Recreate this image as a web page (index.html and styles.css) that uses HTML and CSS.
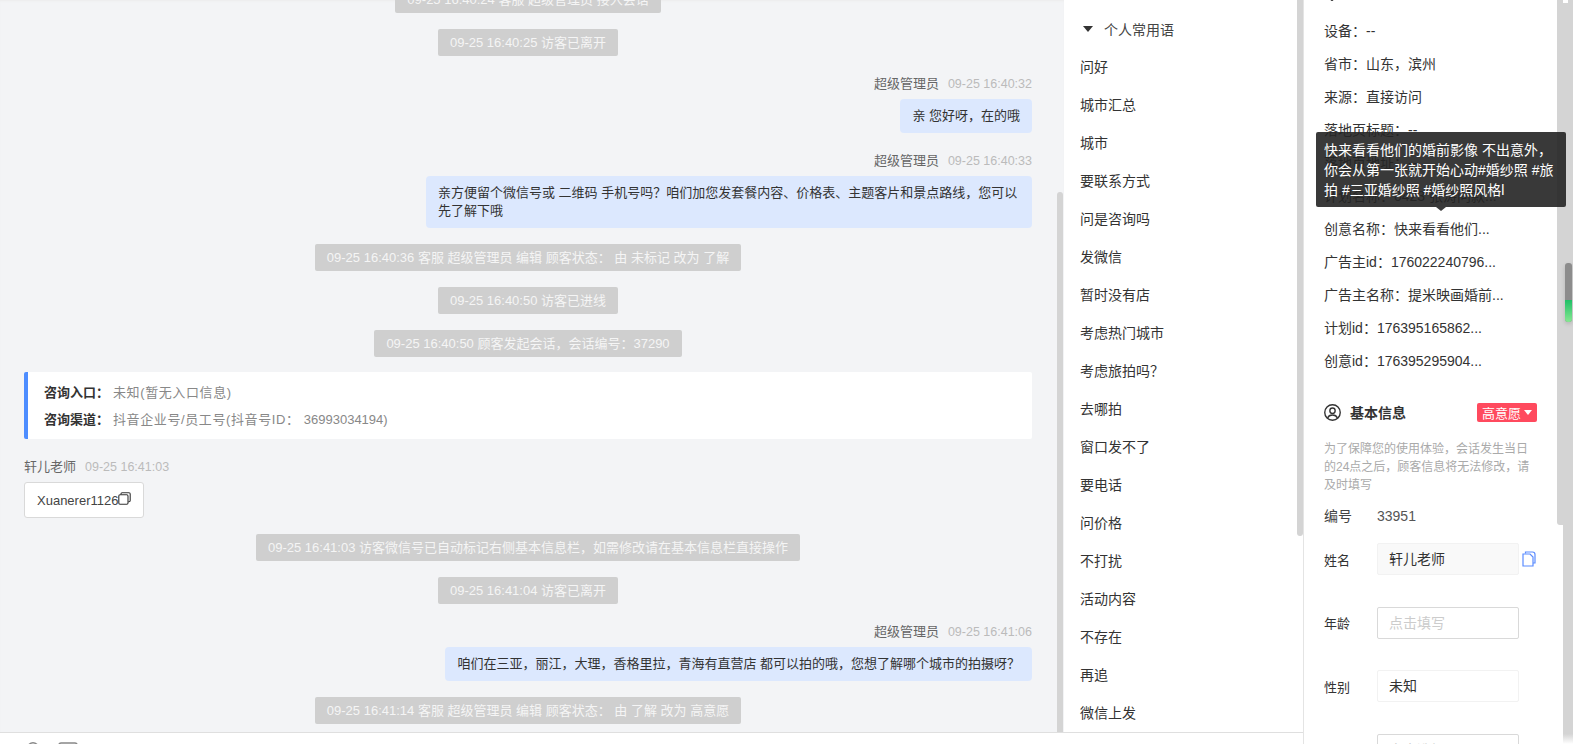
FILE: index.html
```html
<!DOCTYPE html>
<html lang="zh-CN">
<head>
  <meta charset="UTF-8" />
  <title>会话详情</title>
  <link rel="stylesheet" href="styles.css">
</head>
<body>
  <div class="page">
    <div class="main">
      <div class="work">
        <!-- chat log -->
        <div class="chat">
          <div class="chat-list">
            <div class="sys">09-25 16:40:24 客服 超级管理员 接入会话</div>
            <div class="sys">09-25 16:40:25 访客已离开</div>
            <div class="msg msg-me">
              <div class="msg-head"><span class="msg-name">超级管理员</span><span class="msg-time">09-25 16:40:32</span></div>
              <div class="bubble">亲 您好呀，在的哦</div>
            </div>
            <div class="msg msg-me">
              <div class="msg-head"><span class="msg-name">超级管理员</span><span class="msg-time">09-25 16:40:33</span></div>
              <div class="bubble bubble-long">亲方便留个微信号或 二维码 手机号吗？咱们加您发套餐内容、价格表、主题客片和景点路线，您可以先了解下哦</div>
            </div>
            <div class="sys">09-25 16:40:36 客服 超级管理员 编辑 顾客状态： 由 未标记 改为 了解</div>
            <div class="sys">09-25 16:40:50 访客已进线</div>
            <div class="sys">09-25 16:40:50 顾客发起会话，会话编号：37290</div>
            <div class="entry">
              <p><strong>咨询入口：</strong><span class="entry-val">未知(暂无入口信息)</span></p>
              <p><strong>咨询渠道：</strong><span class="entry-val">抖音企业号/员工号(抖音号ID： <span class="entry-num">36993034194)</span></span></p>
            </div>
            <div class="msg">
              <div class="msg-head"><span class="msg-name">轩儿老师</span><span class="msg-time">09-25 16:41:03</span></div>
              <div class="copy-box">Xuanerer1126<svg width="13" height="13" viewBox="0 0 13 13" fill="none" stroke="#333" stroke-width="1.1">
                  <rect x="0.8" y="2.8" width="9.2" height="9.4" rx="1.2"/>
                  <path d="M3 2.6V1.8Q3 .7 4.1 .7H11Q12.2 .7 12.2 1.9V8.6Q12.2 9.8 11 9.8H10.2"/>
                </svg>
              </div>
            </div>
            <div class="sys">09-25 16:41:03 访客微信号已自动标记右侧基本信息栏，如需修改请在基本信息栏直接操作</div>
            <div class="sys">09-25 16:41:04 访客已离开</div>
            <div class="msg msg-me">
              <div class="msg-head"><span class="msg-name">超级管理员</span><span class="msg-time">09-25 16:41:06</span></div>
              <div class="bubble">咱们在三亚，丽江，大理，香格里拉，青海有直营店 都可以拍的哦，您想了解哪个城市的拍摄呀？</div>
            </div>
            <div class="sys">09-25 16:41:14 客服 超级管理员 编辑 顾客状态： 由 了解 改为 高意愿</div>
          </div>
          <div class="chat-thumb"></div>
        </div>

        <!-- common phrases -->
        <div class="phrases">
          <div class="phrases-head"><span class="caret"></span>个人常用语</div>
          <div class="phrase">问好</div>
          <div class="phrase">城市汇总</div>
          <div class="phrase">城市</div>
          <div class="phrase">要联系方式</div>
          <div class="phrase">问是咨询吗</div>
          <div class="phrase">发微信</div>
          <div class="phrase">暂时没有店</div>
          <div class="phrase">考虑热门城市</div>
          <div class="phrase">考虑旅拍吗？</div>
          <div class="phrase">去哪拍</div>
          <div class="phrase">窗口发不了</div>
          <div class="phrase">要电话</div>
          <div class="phrase">问价格</div>
          <div class="phrase">不打扰</div>
          <div class="phrase">活动内容</div>
          <div class="phrase">不存在</div>
          <div class="phrase">再追</div>
          <div class="phrase">微信上发</div>
          <div class="phrases-thumb"></div>
        </div>
      </div>

      <div class="toolbar">
        <svg width="12" height="12" viewBox="0 0 12 12" fill="none" stroke="#888" stroke-width="1.4"><circle cx="6" cy="6" r="5.300"/></svg>
        <svg width="20" height="12" viewBox="0 0 20 12" fill="none" stroke="#888" stroke-width="1.6"><rect x="1" y="1" width="18" height="10" rx="2"/></svg>
      </div>
    </div>

    <!-- visitor info -->
    <div class="side">
      <div class="side-inner">
        <svg class="top-icon" width="16" height="16" viewBox="0 0 16 16" fill="#333"><circle cx="8" cy="14.5" r="1.5"/></svg>
        <div class="info">设备：--</div>
        <div class="info">省市：山东，滨州</div>
        <div class="info">来源：直接访问</div>
        <div class="info">落地页标题：--</div>
        <div class="info">落地页地址：--</div>
        <div class="info">计划名称：0423 张涛问款...</div>
        <div class="info">创意名称：快来看看他们...</div>
        <div class="info">广告主id：176022240796...</div>
        <div class="info">广告主名称：提米映画婚前...</div>
        <div class="info">计划id：176395165862...</div>
        <div class="info">创意id：176395295904...</div>

        <div class="basic-head">
          <div class="basic-title">
            <svg width="17" height="17" viewBox="0 0 16 16" fill="none" stroke="#333" stroke-width="1.3">
              <circle cx="8" cy="8" r="7.3"/>
              <circle cx="8" cy="6.3" r="2.5"/>
              <path d="M3.4 13.2C4.2 11 6 10.4 8 10.4S11.800 11 12.600 13.200"/>
            </svg>
            基本信息
          </div>
          <div class="tag">高意愿<span class="tag-caret"></span></div>
        </div>
        <p class="basic-note">为了保障您的使用体验，会话发生当日的24点之后，顾客信息将无法修改，请及时填写</p>
        <div class="field-plain"><span class="field-label">编号</span>33951</div>
        <div class="field">
          <span class="field-label">姓名</span>
          <div class="input input-off">轩儿老师</div>
          <svg class="copy-blue" width="14" height="16" viewBox="0 0 14 16" fill="#fff" stroke="#5b8cff" stroke-width="1.2">
            <path d="M3.500 2.500V1H10.500Q13 1 13 3.500V12H11"/>
            <path d="M1 3H8L11 6V15H1Z"/>
          </svg>
        </div>
        <div class="field">
          <span class="field-label">年龄</span>
          <div class="input input-empty">点击填写</div>
        </div>
        <div class="field">
          <span class="field-label">性别</span>
          <div class="input input-soft">未知</div>
        </div>
        <div class="field">
          <span class="field-label">城市</span>
          <div class="input input-empty">点击选择</div>
        </div>
      </div>
      <div class="side-thumb"></div>
    </div>

    <div class="page-bar">
      <div class="page-mark"></div>
      <div class="page-thumb"><div class="page-thumb-green"></div></div>
    </div>

    <div class="tooltip">快来看看他们的婚前影像 不出意外，你会从第一张就开始心动#婚纱照 #旅拍 #三亚婚纱照 #婚纱照风格l</div>
  </div>
</body>
</html>
```

FILE: styles.css
```css
* {
  box-sizing: border-box;
}
html, body {
  margin: 0;
  height: 100%;
  overflow: hidden;
}
body {
  font-family: "Liberation Sans", "Noto Sans CJK SC", sans-serif;
  font-size: 13px;
  color: #333;
  background: #fff;
}
p {
  margin: 0;
}
.page {
  position: relative;
  display: flex;
  height: 744px;
  overflow: hidden;
}
.main {
  width: 1303px;
  flex: none;
  display: flex;
  flex-direction: column;
}
.work {
  display: flex;
  height: 733px;
  flex: none;
  border-bottom: 1px solid #dfdfdf;
}

/* chat */
.chat {
  position: relative;
  width: 1064px;
  flex: none;
  overflow: hidden;
  background: #f3f4f6;
  box-shadow: inset 0 2px 2px -1px #ececec;
  padding: 0 32px 0 24px;
}
.chat-list {
  display: flex;
  flex-direction: column;
  gap: 16px;
  margin-top: -14px;
}
.sys {
  align-self: center;
  height: 27px;
  line-height: 27px;
  padding: 0 12px;
  background: #cfcfcf;
  color: #f5f5f5;
  border-radius: 2px;
  white-space: nowrap;
}
.msg {
  display: flex;
  flex-direction: column;
  align-items: flex-start;
}
.msg-me {
  align-items: flex-end;
}
.msg-head {
  display: flex;
  gap: 9px;
  height: 24px;
  line-height: 24px;
  margin-bottom: 3px;
}
.msg-name {
  color: #666;
}
.msg-time {
  font-size: 12.500px;
  color: #bbb;
}
.bubble {
  padding: 8px 12px;
  line-height: 18px;
  background: #dce8fe;
  border-radius: 4px;
  color: #333;
}
.bubble-long {
  width: 606px;
}
.entry {
  margin-top: -1px;
  padding: 7px 16px 6px;
  background: #fff;
  border-left: 4px solid #4d8dff;
  border-radius: 2px;
  line-height: 27px;
  color: #888;
}
.entry strong {
  margin-right: 4px;
  color: #333;
  font-weight: 700;
}
.entry-val {
  letter-spacing: 0.6px;
}
.entry-num {
  letter-spacing: 0;
}
.copy-box {
  display: flex;
  align-items: center;
  width: 120px;
  height: 36px;
  padding-left: 12px;
  background: #fff;
  border: 1px solid #d9d9d9;
  border-radius: 3px;
  color: #444;
}
.copy-box svg {
  flex: none;
  margin-bottom: 3px;
}
.chat-thumb {
  position: absolute;
  top: 192px;
  bottom: 0;
  right: 1px;
  width: 6px;
  background: #d4d4d4;
  border-radius: 3px 3px 0 0;
}

/* phrases */
.phrases {
  position: relative;
  width: 239px;
  flex: none;
  overflow: hidden;
  background: #fff;
  padding: 0 6px 0 16px;
  font-size: 14px;
}
.phrases-head {
  display: flex;
  align-items: center;
  height: 60px;
  padding-left: 3px;
  padding-bottom: 2px;
  color: #444;
}
.caret {
  width: 0;
  height: 0;
  margin-right: 11px;
  border-left: 5px solid transparent;
  border-right: 5px solid transparent;
  border-top: 6px solid #333;
}
.phrase {
  height: 38px;
  line-height: 38px;
  color: #333;
}
.phrases-head + .phrase {
  margin-top: -12px;
}
.phrases-thumb {
  position: absolute;
  top: 0;
  right: 0;
  width: 6px;
  height: 536px;
  background: #d4d4d4;
  border-radius: 0 0 3px 3px;
}

.toolbar {
  display: flex;
  gap: 19px;
  padding: 9px 0 0 27px;
  background: #fff;
}
.toolbar svg {
  flex: none;
}

/* visitor info */
.side {
  position: relative;
  width: 260px;
  flex: none;
  overflow: hidden;
  background: #fff;
  border-left: 1px solid #e4e4e4;
}
.side-inner {
  padding-left: 20px;
  margin-top: -15px;
  font-size: 14px;
}
.top-icon {
  display: block;
  margin-bottom: 13.500px;
}
.info {
  height: 33px;
  line-height: 33px;
  white-space: nowrap;
  color: #333;
}
.basic-head {
  display: flex;
  align-items: center;
  justify-content: space-between;
  height: 20px;
  margin-top: 24.500px;
  padding-right: 26px;
}
.basic-title {
  display: flex;
  align-items: center;
  gap: 9px;
  font-weight: 700;
  color: #333;
}
.tag {
  display: flex;
  align-items: center;
  justify-content: center;
  gap: 3px;
  width: 60px;
  height: 19px;
  background: #ff4a5e;
  color: #fff;
  font-size: 13px;
  font-weight: 400;
  border-radius: 2px;
}
.tag-caret {
  width: 0;
  height: 0;
  border-left: 4px solid transparent;
  border-right: 4px solid transparent;
  border-top: 5px solid #fff;
}
.basic-note {
  width: 212px;
  margin-top: 18px;
  font-size: 12px;
  line-height: 18px;
  color: #aaa;
}
.field-label {
  display: inline-block;
  width: 53px;
  flex: none;
  font-size: 13px;
}
.field-plain {
  margin-top: 12px;
  line-height: 20px;
  color: #555;
}
.field-plain .field-label {
  font-size: 14px;
  color: #444;
}
.field {
  display: flex;
  align-items: center;
  height: 32px;
  margin-top: 31.500px;
}
.field-plain + .field {
  margin-top: 17px;
}
.input {
  width: 142px;
  height: 32px;
  line-height: 30px;
  padding: 0 11px;
  border: 1px solid #d9d9d9;
  border-radius: 2px;
  background: #fff;
}
.input-off {
  background: #f9f9f9;
  border-color: #f2f2f2;
}
.input-soft {
  border-color: #f2f2f2;
}
.input-empty {
  color: #ccc;
}
.copy-blue {
  margin-left: 3px;
}
.side-thumb {
  position: absolute;
  top: 0;
  right: 0;
  width: 6px;
  height: 525px;
  background: #d4d4d4;
  border-radius: 0 0 0 3px;
}

/* outer scrollbar */
.page-bar {
  position: relative;
  width: 10px;
  flex: none;
  background: linear-gradient(#d4d4d4 734px, #fff 744px);
}
.page-mark {
  width: 5px;
  height: 3px;
  background: #fff;
}
.page-thumb {
  position: absolute;
  top: 263px;
  left: 2px;
  width: 7px;
  height: 59px;
  background: #8c8c8c;
  border-radius: 3px;
  overflow: hidden;
  box-shadow: 0 2px 4px rgba(0, 0, 0, 0.15);
}
.page-thumb-green {
  margin-top: 37px;
  height: 22px;
  background: linear-gradient(#1fbf66, #86e892);
}

.tooltip {
  position: absolute;
  top: 132px;
  left: 1316px;
  width: 250px;
  height: 75px;
  padding: 8px;
  background: rgba(35, 35, 35, 0.9);
  color: #fff;
  font-size: 14px;
  line-height: 20px;
  border-radius: 2px;
}
.tooltip::after {
  content: "";
  position: absolute;
  left: 120px;
  bottom: -4px;
  width: 0;
  height: 0;
  border-left: 5px solid transparent;
  border-right: 5px solid transparent;
  border-top: 4px solid #3a3a3a;
}
```
